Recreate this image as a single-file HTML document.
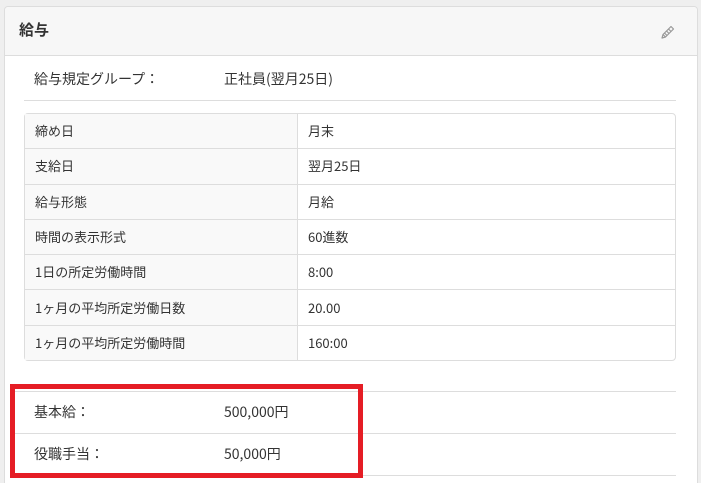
<!DOCTYPE html><html><head><meta charset="utf-8"><style>
html,body{margin:0;width:701px;height:483px;overflow:hidden}
body{background:#efefef;font-family:"Noto Sans CJK JP",sans-serif;color:#333;font-size:14px;position:relative}
.panel{position:absolute;left:4px;top:6px;width:692px;height:477px;background:#fff;border:1px solid #ddd;border-bottom:none;border-radius:4px 4px 0 0}
.hd{height:48px;background:#f7f7f7;border-bottom:1px solid #ddd;border-radius:4px 4px 0 0;position:relative}
.hd span{position:absolute;left:14px;top:12px;font-size:15px;font-weight:bold;line-height:22px}
.t{position:absolute;font-size:14px;white-space:nowrap;line-height:18px}
.line{position:absolute;height:1px;background:#ddd}
table{position:absolute;left:24px;top:113px;width:652px;border-collapse:separate;border-spacing:0;border:1px solid #ddd;border-radius:4px}
td{height:34.3px;padding:0 0 0 10px;border-bottom:1px solid #ddd;font-size:13px;line-height:16px}
tr:last-child td{border-bottom:none}
td:first-child{width:262px;background:#f9f9f9;border-right:1px solid #ddd}
.red{position:absolute;left:10px;top:384px;width:343px;height:84px;border:5px solid #e51d25}
</style></head><body>
<div class="panel"><div class="hd"><span>給与</span>
<svg style="position:absolute;left:655px;top:17px" width="16" height="16" viewBox="0 0 16 16"><path d="M2 14 L3 10.5 L11 2.5 L13.5 5 L5.5 13 Z M3 10.5 L5.5 13 M4.5 9 L7 11.5 M6.5 7 L9 9.5 M8.5 5 L11 7.5" fill="none" stroke="#999" stroke-width="1.2" stroke-linejoin="round"/></svg></div></div>
<div class="t" style="left:34px;top:70px">給与規定グループ：</div>
<div class="t" style="left:224px;top:70px">正社員(翌月25日)</div>
<div class="line" style="left:24px;top:100px;width:652px"></div>
<table>
<tr><td>締め日</td><td>月末</td></tr>
<tr><td>支給日</td><td>翌月25日</td></tr>
<tr><td>給与形態</td><td>月給</td></tr>
<tr><td>時間の表示形式</td><td>60進数</td></tr>
<tr><td>1日の所定労働時間</td><td>8:00</td></tr>
<tr><td>1ヶ月の平均所定労働日数</td><td>20.00</td></tr>
<tr><td>1ヶ月の平均所定労働時間</td><td>160:00</td></tr>
</table>
<div class="line" style="left:15px;top:391px;width:661px"></div>
<div class="line" style="left:15px;top:433px;width:661px"></div>
<div class="line" style="left:15px;top:475px;width:661px"></div>
<div class="t" style="left:34px;top:403px">基本給：</div>
<div class="t" style="left:224px;top:403px">500,000円</div>
<div class="t" style="left:34px;top:445px">役職手当：</div>
<div class="t" style="left:224px;top:445px">50,000円</div>
<div class="red"></div>
</body></html>
